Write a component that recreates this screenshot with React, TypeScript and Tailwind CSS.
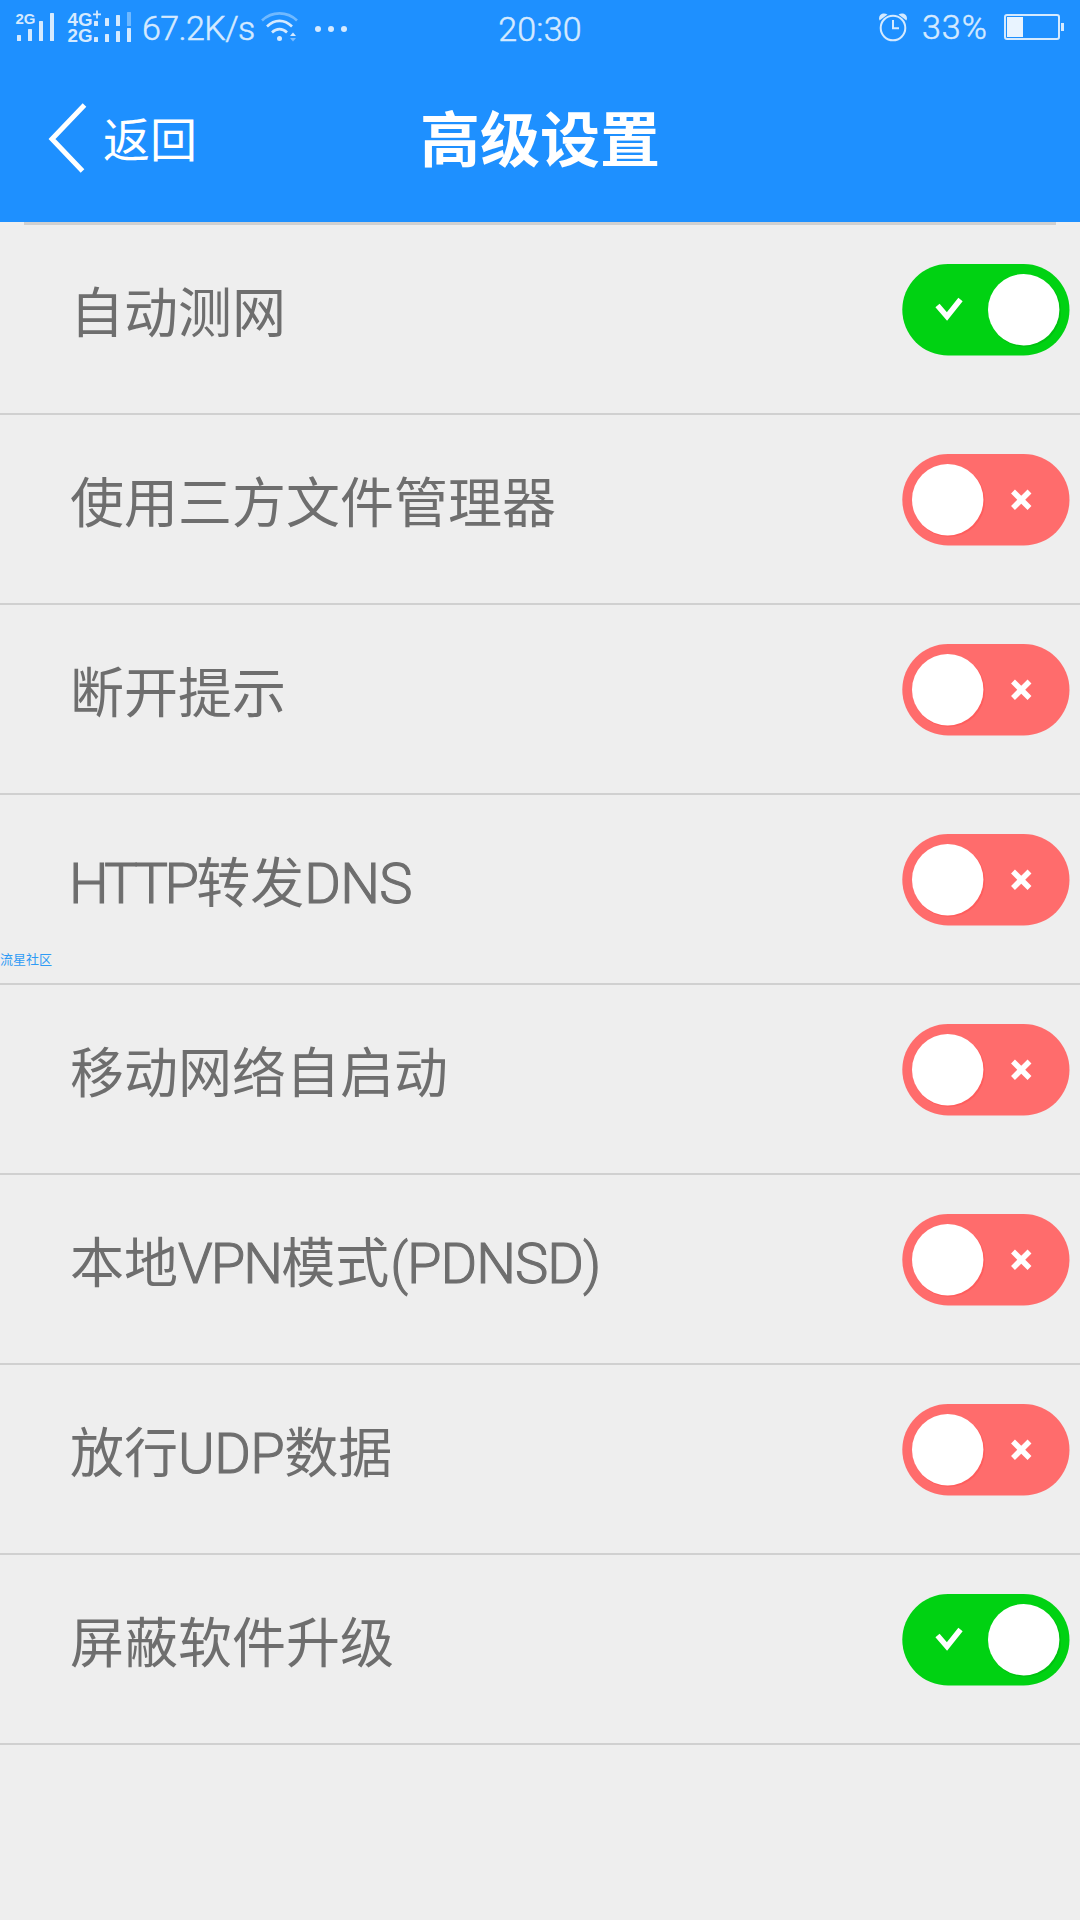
type Part = { text: string; latin?: string };

type Setting = {
  parts: Part[];
  on: boolean;
};

const settings: Setting[] = [
  { parts: [{ text: "自动测网" }], on: true },
  { parts: [{ text: "使用三方文件管理器" }], on: false },
  { parts: [{ text: "断开提示" }], on: false },
  {
    parts: [
      { text: "HTTP", latin: "-ml-px mr-px tracking-[-3.6px]" },
      { text: "转发" },
      { text: "DNS", latin: "tracking-[-0.8px]" },
    ],
    on: false,
  },
  { parts: [{ text: "移动网络自启动" }], on: false },
  {
    parts: [
      { text: "本地" },
      { text: "VPN", latin: "tracking-[-1.9px]" },
      { text: "模式" },
      { text: "(PDNSD)", latin: "ml-px tracking-[-1px]" },
    ],
    on: false,
  },
  {
    parts: [
      { text: "放行" },
      { text: "UDP", latin: "tracking-[-0.6px]" },
      { text: "数据" },
    ],
    on: false,
  },
  { parts: [{ text: "屏蔽软件升级" }], on: true },
];

function SignalIcons() {
  return (
    <svg width="132" height="56" viewBox="0 0 132 56" fill="#d5eaff">
      <g fontFamily="Liberation Sans, sans-serif" fontWeight="700">
        <text x="15.500" y="24" fontSize="15" textLength="20" lengthAdjust="spacingAndGlyphs">2G</text>
        <text x="67.500" y="26" fontSize="19" textLength="25" lengthAdjust="spacingAndGlyphs">4G</text>
        <text x="67.500" y="42" fontSize="19" textLength="25" lengthAdjust="spacingAndGlyphs">2G</text>
      </g>
      <path d="M93 14.300h8M97 10.500v8" stroke="#d5eaff" strokeWidth="1.800" />
      <rect x="17" y="35" width="4" height="6" rx="0.500" />
      <rect x="28" y="29" width="4" height="12" rx="0.500" />
      <rect x="39" y="21" width="4" height="20" rx="0.500" />
      <rect x="50" y="13" width="4" height="28" rx="0.500" />
      <rect x="94" y="21" width="4" height="5" rx="0.500" />
      <rect x="105" y="18" width="4" height="8" rx="0.500" />
      <rect x="116" y="15" width="4" height="11" rx="0.500" />
      <rect x="127" y="12" width="4" height="14" rx="0.500" opacity="0.450" />
      <rect x="94" y="37" width="4" height="5" rx="0.500" />
      <rect x="105" y="34" width="4" height="8" rx="0.500" />
      <rect x="116" y="31" width="4" height="11" rx="0.500" />
      <rect x="127" y="28" width="4" height="14" rx="0.500" />
    </svg>
  );
}

function WifiIcon() {
  return (
    <svg width="40" height="56" viewBox="0 0 40 56" fill="none" stroke="#d5eaff" strokeWidth="2.600">
      <path d="M2 20.500C12 11 27 11 37 20.500" opacity="0.450" />
      <path d="M7 26.500C14.500 19 24.500 19 32 26.500" />
      <path d="M12 32.500C16.500 28 22.500 28 27 32.500" />
      <circle cx="19.500" cy="38.500" r="2.500" fill="#d5eaff" stroke="none" />
      <path d="M30 36l3-3.500 3 3.500z" fill="#d5eaff" stroke="none" />
      <path d="M30 38l3 3.500 3-3.500z" fill="#d5eaff" stroke="none" opacity="0.500" />
    </svg>
  );
}

function AlarmIcon() {
  return (
    <svg width="30" height="56" viewBox="0 0 30 56" fill="none" stroke="#d5eaff" strokeWidth="2">
      <circle cx="15" cy="28" r="12.300" />
      <path d="M15 20v8.300h6" />
      <path d="M1.500 20.500C-0.500 15 5 11.500 9.500 14.500z" fill="#d5eaff" stroke="none" />
      <path d="M28.500 20.500C30.500 15 25 11.500 20.500 14.500z" fill="#d5eaff" stroke="none" />
    </svg>
  );
}

function BatteryIcon() {
  return (
    <svg width="60" height="56" viewBox="0 0 60 56">
      <rect x="1" y="15" width="54" height="24" rx="2" fill="none" stroke="#d5eaff" strokeWidth="2" />
      <rect x="3" y="17" width="16" height="20" fill="#e9f4ff" />
      <rect x="57" y="23" width="3" height="8" fill="#d5eaff" />
    </svg>
  );
}

function StatusBar() {
  return (
    <div className="grid h-14 grid-cols-[1fr_auto_1fr] font-[Roboto,sans-serif] text-[34px] font-light text-[#d5eaff] [-webkit-text-stroke:0.5px_#d5eaff]">
      <div className="flex">
        <SignalIcons />
        <span className="ml-[10px] w-[118px] tracking-[-0.6px] leading-[56px] whitespace-nowrap">67.2K/s</span>
        <WifiIcon />
        <div className="ml-[15px] flex items-center gap-[7px] pb-[2px]">
          <i className="size-[6px] rounded-full bg-[#d5eaff]" />
          <i className="size-[6px] rounded-full bg-[#d5eaff]" />
          <i className="size-[6px] rounded-full bg-[#d5eaff]" />
        </div>
      </div>
      <span className="leading-[59px] tracking-[0.2px]">20:30</span>
      <div className="flex justify-end pr-4">
        <AlarmIcon />
        <span className="ml-[14px] w-[82px] leading-[55px] tracking-[1px]">33%</span>
        <BatteryIcon />
      </div>
    </div>
  );
}

function Toggle({ on }: { on: boolean }) {
  return (
    <svg
      role="switch"
      aria-checked={on}
      className="mt-[39px] mr-[10px] shrink-0"
      width="168"
      height="92"
      viewBox="0 0 168 92"
      fill="none"
    >
      <rect x="0.300" width="167.200" height="91.600" rx="45.800" fill={on ? "#00d212" : "#ff6c6c"} />
      <circle cx={on ? 123 : 47} cy="47" r="36" fill={on ? "#00b80f" : "#ff5454"} opacity="0.600" />
      <circle cx={on ? 121.700 : 45.700} cy="45.700" r="35.700" fill="#fff" />
      {on ? (
        <path d="M35.500 41.500L45 52.500L58.500 35.500" stroke="#fff" strokeWidth="5.500" />
      ) : (
        <path d="M111 37.500L127.500 54M127.500 37.500L111 54" stroke="#fff" strokeWidth="5.500" />
      )}
    </svg>
  );
}

function SettingRow({ parts, on }: Setting) {
  return (
    <li className="flex h-[190px] justify-between border-b-2 border-[#d0d0d0]">
      <span className="pt-[45px] pl-[70px] text-[54px] leading-[80px] text-[#6e6e6e]">
        {parts.map((part) =>
          part.latin ? (
            <span
              key={part.text}
              className={`font-[Roboto,sans-serif] text-[56px] font-light [-webkit-text-stroke:1.1px_#6e6e6e] ${part.latin}`}
            >
              {part.text}
            </span>
          ) : (
            part.text
          )
        )}
      </span>
      <Toggle on={on} />
    </li>
  );
}

export default function App() {
  return (
    <main className="relative h-[1920px] w-[1080px] overflow-hidden bg-[#eeeeee] font-['Noto_Sans_CJK_SC',sans-serif]">
      <header className="h-[222px] bg-[#1e90ff] text-white">
        <StatusBar />
        <div className="grid h-[166px] grid-cols-[1fr_auto_1fr]">
          <div className="flex pl-[48px]">
            <svg className="mt-[46px]" width="42" height="74" viewBox="0 0 42 74" fill="none" stroke="#fff" strokeWidth="5">
              <path d="M36.500 3L4 37L34.500 69" />
            </svg>
            <span className="ml-[13px] pt-[46px] text-[47px] leading-[70px]">返回</span>
          </div>
          <h1 className="pt-[40px] text-[60px] leading-[80px] font-bold">高级设置</h1>
          <div />
        </div>
      </header>

      <div className="mx-6 h-[3px] bg-[#d0d0d0]" />
      <ul>
        {settings.map((setting, i) => (
          <SettingRow key={i} {...setting} />
        ))}
      </ul>

      {/* floating community tag on the left edge */}
      <span className="absolute top-[949px] left-0 text-[13px] leading-5 text-[#2f9bf5]">流星社区</span>
    </main>
  );
}
